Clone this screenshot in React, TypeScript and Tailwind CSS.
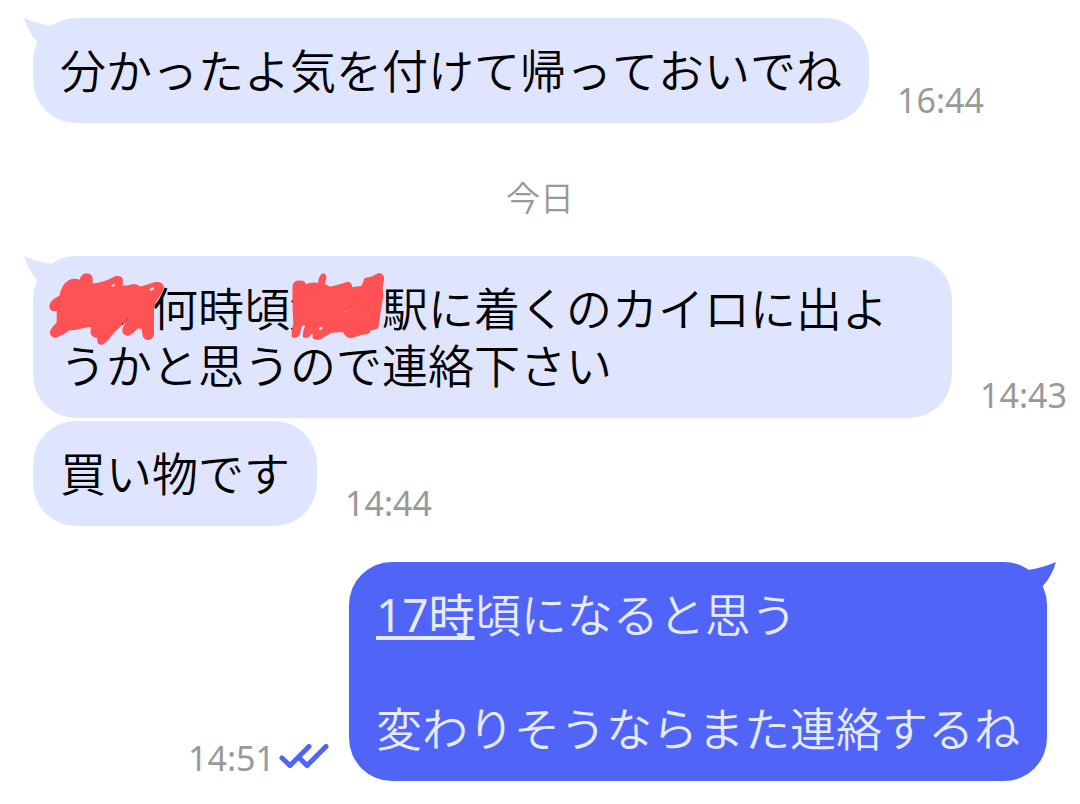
import type { ReactNode } from "react";
import clsx from "clsx";

function Tail({ mine }: { mine?: boolean }) {
  return (
    <svg
      aria-hidden="true"
      viewBox="0 0 30 26"
      className={clsx(
        "absolute top-0 h-[26px] w-[30px]",
        mine ? "-right-[9px] -scale-x-100 text-[#5065f8]" : "-left-[9px] text-[#e0e5ff]"
      )}
    >
      <path d="M0 0 Q14 6 28 8 L28 24 L13.500 24.500 Q4 14 0 0 Z" fill="currentColor" />
    </svg>
  );
}

function ReadTicks() {
  return (
    <svg
      role="img"
      aria-label="既読"
      viewBox="0 0 50 26"
      className="ml-1 mb-3 h-[26px] w-[50px] shrink-0"
      fill="none"
      stroke="#5065f8"
      strokeWidth="5"
      strokeLinecap="round"
      strokeLinejoin="round"
    >
      <path d="M3 15 L11 22.600 L30 3.400" />
      <path d="M21 15.500 L28 22.600 L47 3.400" />
    </svg>
  );
}

// hand drawn marker over a name
function NameScribble() {
  return (
    <span className="relative inline-block h-8 w-[92px] align-middle">
      <svg
        aria-hidden="true"
        viewBox="0 0 420 300"
        className="absolute -left-[20px] -top-[38px] h-[100px] w-[140px] max-w-none"
      >
        <path
          d="M30 140 Q30 122 60 108 Q66 75 88 62 Q103 54 120 62 Q125 42 140 42 Q157 42 156 60 L156 72 Q184 74 228 50 Q247 48 247 62 L245 78 Q262 80 275 75 Q290 72 300 82 Q325 76 345 68 Q368 66 370 82 Q366 96 346 125 L340 145 L340 225 Q336 238 322 238 Q310 236 309 222 L307 205 L294 203 Q278 218 264 226 Q247 224 249 207 L262 180 L245 194 Q225 210 203 238 Q185 260 175 248 L173 232 Q150 230 154 212 L154 198 Q125 202 105 208 L88 209 Q65 225 45 232 Q28 228 33 212 Q40 198 52 188 L52 165 Q54 150 48 150 Q31 154 30 140 Z"
          fill="#ff5254"
          stroke="#ff5254"
          strokeWidth="4"
          strokeLinejoin="round"
        />
        <path d="M212 78 Q220 70 226 74 L220 80 Z M327 90 Q334 80 342 82 Q344 90 334 92 Z" fill="#e0e5ff" />
        <path d="M246 193 L250 190 M260 181 L262 179" stroke="#000" strokeWidth="3" />
      </svg>
    </span>
  );
}

function StationScribble() {
  return (
    <span className="relative inline-block h-8 w-[92px] align-middle">
      <svg
        aria-hidden="true"
        viewBox="0 0 420 270"
        className="absolute -left-[20px] -top-[38px] h-[90px] w-[140px] max-w-none"
      >
        <path d="M65 126 L72 120 M64 208 L72 204 M104 92 L112 86" stroke="#000" strokeWidth="5" />
        <path
          d="M70 75 Q76 62 88 64 Q104 62 106 76 Q124 66 146 72 Q148 44 160 42 Q171 44 165 62 L163 74 L180 82 Q210 76 234 67 Q246 70 244 84 L276 79 L286 55 Q310 52 325 41 Q343 42 340 60 L336 82 L338 110 Q330 150 328 170 L324 200 Q320 208 302 209 Q295 224 280 221 Q260 228 242 233 Q226 230 220 214 L184 216 Q170 226 156 232 Q142 242 130 234 L130 216 L122 222 Q112 236 101 230 Q99 218 108 194 L94 196 L87 224 Q78 236 67 230 Q66 214 72 190 Q68 120 70 75 Z"
          fill="#ff5254"
          stroke="#ff5254"
          strokeWidth="4"
          strokeLinejoin="round"
        />
        <path d="M147 203 Q152 197 158 204 Q156 211 148 211 Z M224 154 L230 154 L227 157 Z" fill="#e0e5ff" />
      </svg>
    </span>
  );
}

function Message({
  time,
  mine,
  tail,
  children,
}: {
  time: string;
  mine?: boolean;
  tail?: boolean;
  children: ReactNode;
}) {
  return (
    <li className={clsx("flex items-end", mine ? "flex-row-reverse pr-[33px]" : "pl-[33px]")}>
      <div
        className={clsx(
          "relative max-w-[919px] rounded-[43px] px-[27px] py-6 text-[46px] leading-[57px] font-[350]",
          mine ? "bg-[#5065f8] text-[#e6eaff]" : "bg-[#e0e5ff] text-black"
        )}
      >
        {tail && <Tail mine={mine} />}
        {children}
      </div>
      <div className={clsx("flex shrink-0 items-end", mine ? "mr-5" : "ml-7")}>
        <time className="text-[34px] leading-[46px] text-[#999]">{time}</time>
        {mine && <ReadTicks />}
      </div>
    </li>
  );
}

export default function App() {
  return (
    <main
      lang="ja"
      className="min-h-screen overflow-hidden bg-white pt-[18px] pb-6 font-['Noto_Sans','Noto_Sans_CJK_JP',sans-serif] [font-kerning:none]"
    >
      <ol>
        <Message time="16:44" tail>
          <p>分かったよ気を付けて帰っておいでね</p>
        </Message>
      </ol>
      <h2 className="mt-[52px] mb-[35px] text-center text-[34px] leading-[46px] font-[350] text-[#999]">今日</h2>
      <ol>
        <Message time="14:43" tail>
          <p>
            <NameScribble />
            何時頃
            <StationScribble />
            <span>駅に着くのカイロに出よ</span>
            <span>うかと思うので連絡下さい</span>
          </p>
        </Message>
        <li className="h-[3px]" aria-hidden="true" />
        <Message time="14:44">
          <p>買い物です</p>
        </Message>
        <li className="h-9" aria-hidden="true" />
        <Message time="14:51" mine tail>
          <p>
            <a href="#time" className="font-normal underline decoration-4 underline-offset-4">
              17時
            </a>
            頃になると思う
          </p>
          <p className="mt-[57px]">変わりそうならまた連絡するね</p>
        </Message>
      </ol>
    </main>
  );
}
